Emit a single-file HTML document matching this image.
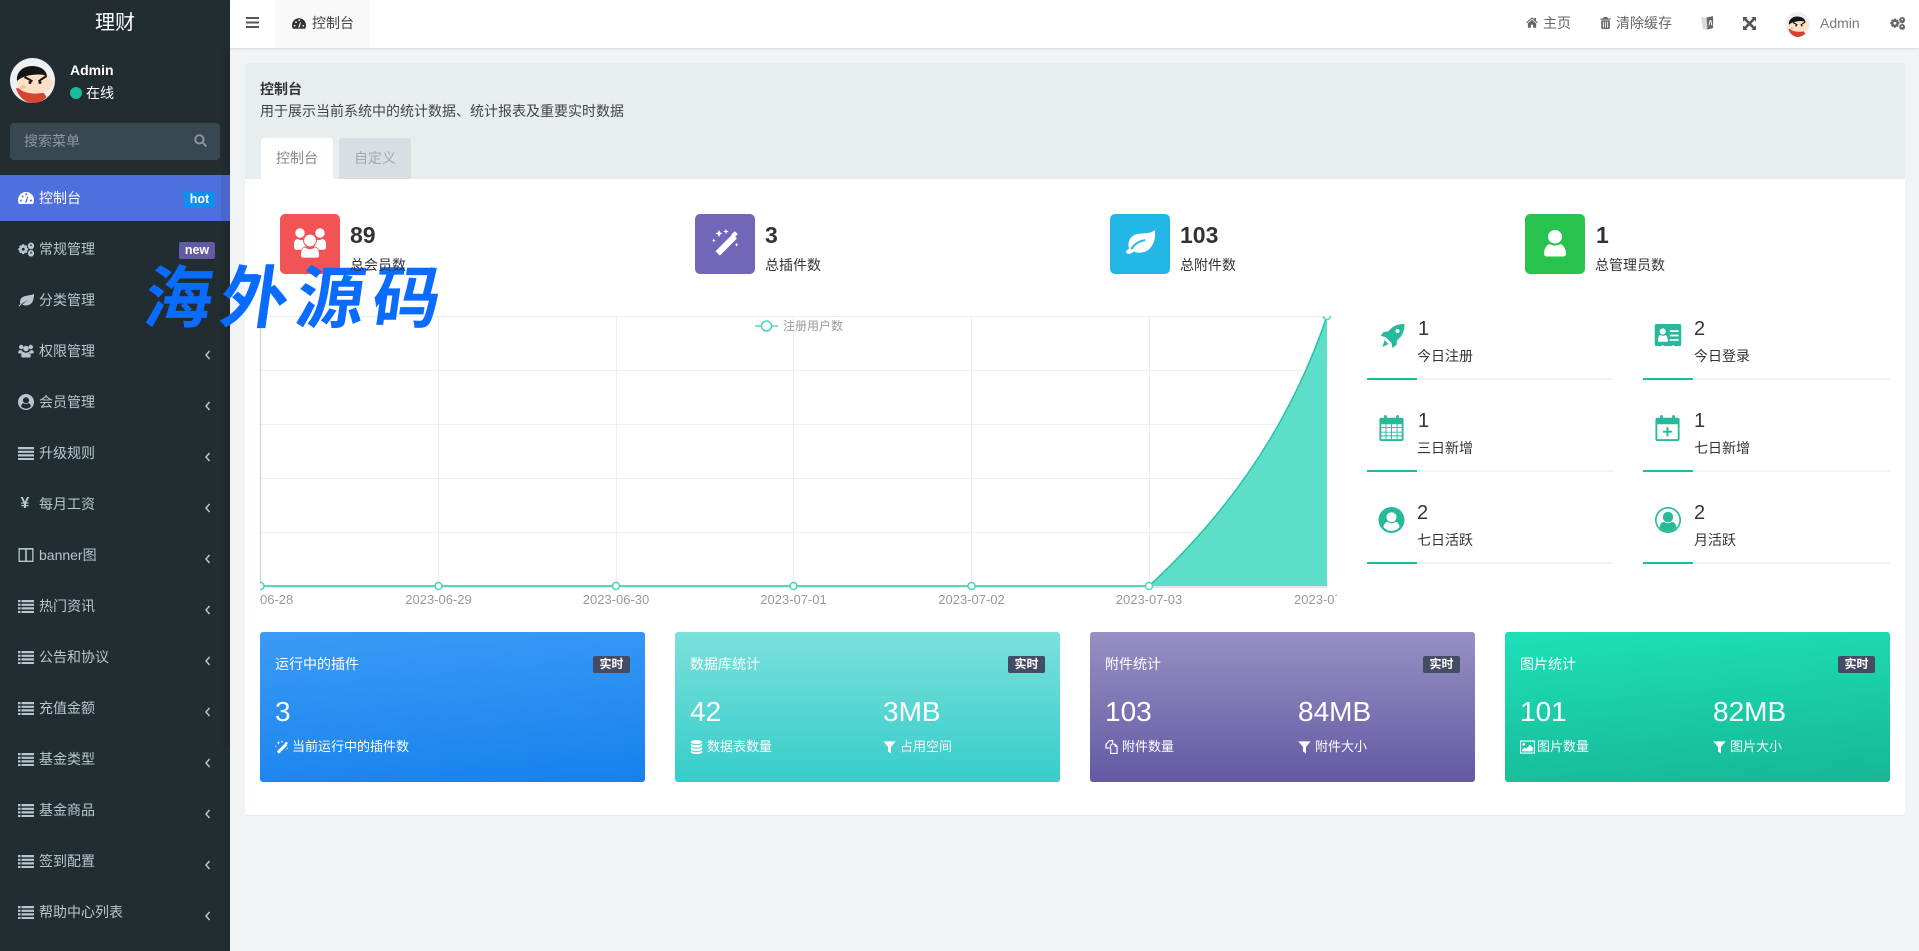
<!DOCTYPE html>
<html lang="zh"><head><meta charset="utf-8"><title>控制台</title>
<style>
*{box-sizing:border-box}
html,body{margin:0;padding:0;width:1919px;height:951px;overflow:hidden;background:#f1f4f6;font:14px/20px "Liberation Sans","Noto Sans CJK SC",sans-serif;color:#333}
.a{position:absolute;white-space:nowrap}
svg{display:block;fill:currentColor}
#side{position:absolute;left:0;top:0;width:230px;height:951px;background:#222d32;color:#b8c7ce}
.m{position:absolute;left:39px;white-space:nowrap}
.ic{position:absolute;left:18px;width:16px;height:16px}
.ch{position:absolute;left:204px;width:8px;height:12px;fill:none;stroke:#b8c7ce;stroke-width:1.5}
.wh{color:#fff}
.sq{position:absolute;top:214px;width:60px;height:60px;border-radius:5px;color:#fff}
.sq svg{position:absolute}
.sn{position:absolute;top:223px;font-size:23px;line-height:24px;font-weight:bold;color:#333}
.sl{position:absolute;top:255px;z-index:5}
.bar{position:absolute;height:2px;width:246px;background:#f3f3f3}
.bar i{display:block;height:2px;width:50px;background:#1abc9c}
.rn{position:absolute;font-size:20px;line-height:24px;color:#333}
.rl{position:absolute}
.ri{position:absolute;width:30px;height:28px;color:#26b99a}
.card{position:absolute;top:632px;width:385px;height:150px;border-radius:3px;color:#fff}
.card .t{position:absolute;left:15px;top:22px}
.card .b{position:absolute;right:15px;top:24px;width:37px;height:17px;line-height:17px;background:#444c65;border-radius:2px;font-size:12px;font-weight:bold;text-align:center}
.card .n{position:absolute;top:64px;font-size:28px;line-height:32px}
.card .s{position:absolute;top:105px;white-space:nowrap;font-size:13px}
.card .s svg{position:absolute;left:0;top:3px;width:13px;height:14px}
.card .s span{margin-left:17px}
.bdg{position:absolute;left:184px;height:17px;line-height:17px;border-radius:2px;color:#fff;font-weight:bold;font-size:12.5px;text-align:center}
</style></head><body>
<svg width="0" height="0" style="position:absolute">
<symbol id="dash" viewBox="0 0 16 14"><path fill-rule="evenodd" d="M8 1a8 8 0 0 0-8 8c0 1.800.4 3 1 4h14c.6-1 1-2.200 1-4a8 8 0 0 0-8-8zM3 8.500a1 1 0 1 1 0 2 1 1 0 0 1 0-2zM4.600 4.500a1 1 0 1 1 0 2 1 1 0 0 1 0-2zM7.200 3a1 1 0 1 1 1.600 1 1 1 0 0 1-1.600-1zM13 8.500a1 1 0 1 1 0 2 1 1 0 0 1 0-2zM7 11.500l2.300-6 1 .4-1.700 5.600z"/></symbol>
<symbol id="cogs" viewBox="0 0 16 14"><path fill-rule="evenodd" d="M4.200 2.300h2l.4 1.500 1.300-.7 1.400 1.400-.7 1.300 1.500.4v2l-1.500.4.7 1.300-1.400 1.400-1.300-.7-.4 1.500h-2l-.4-1.500-1.300.7-1.400-1.400.7-1.300L.3 8.200v-2l1.500-.4-.7-1.300 1.400-1.400 1.300.7zM5.200 5.700a1.500 1.500 0 1 0 0 3 1.500 1.500 0 0 0 0-3zM13 .3l.9.7 1-.1.500 1.200.9.700-.5 1.100.5 1.100-.9.700-.5 1.200-1-.1-.9.700-.9-.7-1 .1-.5-1.200-.9-.7.500-1.100-.5-1.100.9-.7.500-1.200 1 .1zM13 2.400a.9.9 0 1 0 0 1.800.9.9 0 0 0 0-1.800zM13 7.700l.9.7 1-.1.500 1.200.9.700-.5 1.100.5 1.100-.9.700-.5 1.200-1-.1-.9.700-.9-.7-1 .1-.5-1.200-.9-.7.500-1.100-.5-1.100.9-.7.500-1.200 1 .1zM13 9.800a.9.9 0 1 0 0 1.800.9.9 0 0 0 0-1.800z"/></symbol>
<symbol id="leaf" viewBox="0 0 16 14"><path d="M15.500 1C13 3 5 1.500 2.500 6.500c-.8 1.600-.6 3.400-.1 4.300C1.700 11.500 1 12.200.500 13l1 .5c.6-1 1.400-1.900 2.200-2.500 2-1.900 4-3 6.800-3.900-2.700 1.300-4.800 2.900-6.200 4.700 3.400 1.400 8 .6 10-2.700 1.300-2.200 1.700-5.700 1.700-8.100z"/></symbol>
<symbol id="leafb" viewBox="0 0 32 25"><path d="M31 0c1 8-1 15-6 20-5 4-11 4.500-16 2.500-1 .8-3 2.200-5 2.500-1.500.2-3-1-3-2.200 0-1.500 1.500-2 3-3.300C2.500 14 4 8 10 5 15 2.500 26 5 31 0z"/><path d="M6.500 20c3-5.500 8-8.500 14.500-9.500" fill="none" stroke="#22b7e5" stroke-width="2"/></symbol>
<symbol id="users" viewBox="0 0 16 14"><circle cx="3.200" cy="3" r="2.200"/><circle cx="12.800" cy="3" r="2.200"/><circle cx="8" cy="4.500" r="2.800"/><path d="M.2 9.300C.2 7 1.300 6 2.500 6c.7.600 1.300.8 2.200.7-.3 1-.3 2 0 3zM15.800 9.300c0-2.300-1.100-3.300-2.300-3.300-.7.600-1.300.8-2.200.7.300 1 .3 2 0 3zM4 13.500c-.6-.3-.7-1-.7-1.600 0-2 1-3.800 2.300-4 .6.500 1.500.9 2.400.9s1.800-.4 2.400-.9c1.300.2 2.300 2 2.300 4 0 .7-.1 1.300-.7 1.600z"/></symbol>
<symbol id="usersb" viewBox="0 0 32 30"><circle cx="6" cy="5" r="4.700"/><circle cx="26" cy="5" r="4.700"/><path d="M0 19v-3c0-3 1.500-5 4-5 1 1 3 1.500 5 .7 0 2.500 1 5 3 7-2 .6-3 1.500-4 3H2c-1 0-2-1-2-2.700zM32 19v-3c0-3-1.500-5-4-5-1 1-3 1.500-5 .7 0 2.500-1 5-3 7 2 .6 3 1.500 4 3h6c1 0 2-1 2-2.700z"/><g stroke="#f25355" stroke-width=".8"><circle cx="16" cy="12.500" r="6.300"/><path d="M9 30c-1.500 0-2.500-1-2.500-3 0-3 1-7 4.500-8 1.500 1.300 3 1.800 5 1.800s3.500-.5 5-1.800c3.500 1 4.500 5 4.500 8 0 2-1 3-2.500 3z"/></g></symbol>
<symbol id="uc" viewBox="0 0 16 16"><path fill-rule="evenodd" d="M8 0a8 8 0 1 0 0 16A8 8 0 0 0 8 0zM8 3.200a3 3 0 1 1 0 6.200 3 3 0 0 1 0-6.200zM3 12.300c.3-1.800 1.300-3 2.500-3.200.7.600 1.500 1 2.500 1s1.800-.4 2.500-1c1.200.2 2.200 1.400 2.500 3.200A6.500 6.500 0 0 1 8 14.700a6.500 6.500 0 0 1-5-2.400z"/></symbol>
<symbol id="uco" viewBox="0 0 16 16"><path fill-rule="evenodd" d="M8 0a8 8 0 1 0 0 16A8 8 0 0 0 8 0zM8 1a7 7 0 1 1 0 14A7 7 0 0 1 8 1z"/><circle cx="8" cy="6.200" r="3.200"/><path d="M2.800 12.500c.3-2 1.500-3.200 2.700-3.400.7.600 1.500.9 2.500.9s1.800-.3 2.500-.9c1.200.2 2.400 1.400 2.700 3.400A7 7 0 0 1 8 15a7 7 0 0 1-5.200-2.500z"/></symbol>
<symbol id="just" viewBox="0 0 16 14"><path d="M0 1h16v2.200H0zM0 4.700h16v2.200H0zM0 8.300h16v2.200H0zM0 12h16v2H0z"/></symbol>
<symbol id="list" viewBox="0 0 16 14"><path d="M0 1h2.500v2.200H0zM3.500 1H16v2.200H3.500zM0 4.700h2.500v2.200H0zM3.500 4.700H16v2.200H3.500zM0 8.300h2.500v2.200H0zM3.500 8.300H16v2.200H3.500zM0 12h2.500v2H0zM3.500 12H16v2H3.500z"/></symbol>
<symbol id="cols" viewBox="0 0 16 14"><path fill-rule="evenodd" d="M.5 0h15v14H.5zM1.800 1.600v11h5.400v-11zM8.800 1.600v11h5.400v-11z"/></symbol>
<symbol id="wand" viewBox="0 0 32 32"><path d="M23.500 7l5 5L9 31.500l-5-5zM26 3.500l3.500 3.500-4 4-3.500-3.500zM8 2l1.200 3L12 6.200 9.200 7.500 8 10.500 6.800 7.500 4 6.200 6.800 5zM16 1l.9 2.100L19 4l-2.100.9L16 7l-.9-2.100L13 4l2.100-.9zM2 12l.7 1.500 1.500.7-1.500.7L2 16.500l-.7-1.600-1.300-.7 1.300-.7zM28 17l.7 1.500 1.500.7-1.500.7-.7 1.600-.7-1.600-1.300-.7 1.300-.7z"/></symbol>
<symbol id="usr" viewBox="0 0 22 27"><ellipse cx="11" cy="6.700" rx="7" ry="6.700"/><path d="M3 26.500c-2 0-3-1-3-3 0-4 2-8 5.500-9.500 1.500 1 3.500 1.500 5.500 1.500s4-.5 5.500-1.500c3.500 1.500 5.500 5.500 5.500 9.500 0 2-1 3-3 3z"/></symbol>
<symbol id="db" viewBox="0 0 14 16"><path d="M7 0c3.600 0 6.500 1 6.500 2.300S10.600 4.700 7 4.700.5 3.600.5 2.300 3.400 0 7 0zM.5 4.100C2 5.200 4.500 5.800 7 5.800s5-.6 6.500-1.700v2.200C13.500 7.600 10.600 8.700 7 8.700S.5 7.600.5 6.300zM.5 8.100C2 9.200 4.500 9.800 7 9.800s5-.6 6.500-1.700v2.200c0 1.300-2.900 2.400-6.500 2.400S.5 11.600.5 10.300zM.5 12.100C2 13.200 4.500 13.800 7 13.800s5-.6 6.500-1.700v1.600C13.500 15 10.600 16 7 16S.5 15 .5 13.700z"/></symbol>
<symbol id="fil" viewBox="0 0 14 16"><path d="M0 1.500h14L8.700 8v7.500l-3.400-2.500V8z"/></symbol>
<symbol id="files" viewBox="0 0 14 16"><path fill-rule="evenodd" d="M4.500 0H9l-.1 4.500-2.500 2v3.300H0V4.500zM4.500 1.500L1.500 5.200v3.300h3.900V5.700l2.300-1.800V1.500zM9 4.200h2.500L14 7v9H5.500V9.800h1.200v4.900h6V7.800H10.500V5.500H9z"/></symbol>
<symbol id="pic" viewBox="0 0 16 14"><path fill-rule="evenodd" d="M0 0h16v14H0zM1.200 1.200v11.600h13.600V1.200zM4 2.500a1.500 1.500 0 1 1 0 3 1.500 1.500 0 0 1 0-3zM2.400 11.600V9.800L5 7.300l1.600 1.500 4-4.400 3 3.300v3.900z"/></symbol>
<symbol id="face" viewBox="0 0 45 45"><circle cx="22.500" cy="22.500" r="22.500" fill="#eef0f1"/><path d="M6 30c2 8 9 15 16.500 15 6 0 11-2.500 14-6l-4-6-20-2z" fill="#d6432e"/><path d="M7 22c-1 6 2 10 8 12 8 2.500 17 2 23-1 4-2 6-7 4-10-1-3-3-6-5-7H12c-2 1-4 3-5 6z" fill="#fde0c5"/><path d="M7 23C6 15 12 8 22 8c7 0 14 3 15 10-3-1-5-1.500-8-1.500-5 0-9 .5-14 2-3 1-5 2-8 4.500z" fill="#151515"/><path d="M15 18l8 4.500-1 1.500-8-4zM36 17l-8 5.500 1 1.500 8-5z" fill="#151515"/><circle cx="20" cy="24.500" r="1.500" fill="#151515"/><circle cx="30" cy="24.500" r="1.500" fill="#151515"/><ellipse cx="13" cy="29" rx="2.800" ry="1.800" fill="#f6b8a8"/></symbol>
</svg>

<div id="side">
<div class="a" style="left:0;width:230px;top:11px;line-height:24px;text-align:center;font-size:20px;color:#fff">理财</div>
<div class="a" style="left:221px;top:48px;width:9px;height:698px;background:rgba(0,0,0,.05)"></div>
<svg class="a" style="left:10px;top:58px;width:45px;height:45px"><use href="#face"/></svg>
<div class="a" style="left:70px;top:60px;font-weight:bold;color:#fff">Admin</div>
<div class="a" style="left:70px;top:87px;width:12px;height:12px;border-radius:50%;background:#18bc9c"></div>
<div class="a" style="left:86px;top:83px;color:#fff">在线</div>
<div class="a" style="left:10px;top:123px;width:210px;height:37px;background:#374850;border-radius:4px"></div>
<div class="a" style="left:24px;top:131px;color:#8b989e">搜索菜单</div>
<svg class="a" viewBox="0 0 14 14" style="left:194px;top:134px;width:13px;height:13px;fill:none;stroke:#8b989e;stroke-width:2"><circle cx="5.800" cy="5.800" r="4.500"/><path d="M9 9l4.300 4.300"/></svg>

<div class="a" style="left:0;top:175px;width:230px;height:46px;background:#4e70dc"></div>
<div class="a" style="left:221px;top:175px;width:9px;height:46px;background:#4a68cc"></div>
<svg class="ic wh" style="top:190px"><use href="#dash"/></svg><div class="m wh" style="top:188px">控制台</div>
<div class="bdg" style="top:191px;width:31px;background:#0f8fef">hot</div>

<svg class="ic" style="top:241px"><use href="#cogs"/></svg><div class="m" style="top:239px">常规管理</div>
<div class="bdg" style="left:179px;top:242px;width:36px;background:#625aa3">new</div>
<svg class="ic" style="top:292px"><use href="#leaf"/></svg><div class="m" style="top:290px">分类管理</div>
<svg class="ic" style="top:343px"><use href="#users"/></svg><div class="m" style="top:341px">权限管理</div>
<svg class="ch" viewBox="0 0 8 12" style="top:349px"><path d="M5.500 2L2 6l3.500 4"/></svg>
<svg class="ic" style="top:394px"><use href="#uc"/></svg><div class="m" style="top:392px">会员管理</div>
<svg class="ch" viewBox="0 0 8 12" style="top:400px"><path d="M5.500 2L2 6l3.500 4"/></svg>
<svg class="ic" style="top:445px"><use href="#just"/></svg><div class="m" style="top:443px">升级规则</div>
<svg class="ch" viewBox="0 0 8 12" style="top:451px"><path d="M5.500 2L2 6l3.500 4"/></svg>
<div class="a" style="left:19px;top:494px;width:12px;text-align:center;font-weight:bold;font-size:16px">¥</div><div class="m" style="top:494px">每月工资</div>
<svg class="ch" viewBox="0 0 8 12" style="top:502px"><path d="M5.500 2L2 6l3.500 4"/></svg>
<svg class="ic" style="top:547px"><use href="#cols"/></svg><div class="m" style="top:545px">banner图</div>
<svg class="ch" viewBox="0 0 8 12" style="top:553px"><path d="M5.500 2L2 6l3.500 4"/></svg>
<svg class="ic" style="top:598px"><use href="#list"/></svg><div class="m" style="top:596px">热门资讯</div>
<svg class="ch" viewBox="0 0 8 12" style="top:604px"><path d="M5.500 2L2 6l3.500 4"/></svg>
<svg class="ic" style="top:649px"><use href="#list"/></svg><div class="m" style="top:647px">公告和协议</div>
<svg class="ch" viewBox="0 0 8 12" style="top:655px"><path d="M5.500 2L2 6l3.500 4"/></svg>
<svg class="ic" style="top:700px"><use href="#list"/></svg><div class="m" style="top:698px">充值金额</div>
<svg class="ch" viewBox="0 0 8 12" style="top:706px"><path d="M5.500 2L2 6l3.500 4"/></svg>
<svg class="ic" style="top:751px"><use href="#list"/></svg><div class="m" style="top:749px">基金类型</div>
<svg class="ch" viewBox="0 0 8 12" style="top:757px"><path d="M5.500 2L2 6l3.500 4"/></svg>
<svg class="ic" style="top:802px"><use href="#list"/></svg><div class="m" style="top:800px">基金商品</div>
<svg class="ch" viewBox="0 0 8 12" style="top:808px"><path d="M5.500 2L2 6l3.500 4"/></svg>
<svg class="ic" style="top:853px"><use href="#list"/></svg><div class="m" style="top:851px">签到配置</div>
<svg class="ch" viewBox="0 0 8 12" style="top:859px"><path d="M5.500 2L2 6l3.500 4"/></svg>
<svg class="ic" style="top:904px"><use href="#list"/></svg><div class="m" style="top:902px">帮助中心列表</div>
<svg class="ch" viewBox="0 0 8 12" style="top:910px"><path d="M5.500 2L2 6l3.500 4"/></svg>
</div>

<!-- header -->
<div class="a" style="left:230px;top:0;width:1689px;height:48px;background:#fff;box-shadow:0 1px 2px rgba(0,0,0,.12)"></div>
<svg class="a" viewBox="0 0 13 11" style="left:246px;top:17px;width:13px;height:11px;color:#555"><path d="M0 0h13v2H0zM0 4.500h13v2H0zM0 9h13v2H0z"/></svg>
<div class="a" style="left:275px;top:0;width:95px;height:48px;background:#f9f9f9"></div>
<svg class="a" viewBox="0 0 16 14" style="left:292px;top:17px;width:14px;height:13px;color:#333"><use href="#dash"/></svg>
<div class="a" style="left:312px;top:13px;color:#444">控制台</div>
<svg class="a" viewBox="0 0 16 14" style="left:1526px;top:17px;width:12px;height:11px;color:#666"><path d="M8 0l3 2.700V1h2.300v3.700L16 7l-1 1-7-6-7 6-1-1zM8 3.300l5.500 4.800V14H9.500v-4h-3v4h-4V8.100z"/></svg>
<div class="a" style="left:1543px;top:13px;color:#666">主页</div>
<svg class="a" viewBox="0 0 12 14" style="left:1600px;top:17px;width:11px;height:12px;color:#666"><path fill-rule="evenodd" d="M4 0h4l1 1.800h3v1.400H0V1.800h3zM1 4h10v9a1 1 0 0 1-1 1H2a1 1 0 0 1-1-1zM3 5.500v7h1v-7zM5.500 5.500v7h1v-7zM8 5.500v7h1v-7z"/></svg>
<div class="a" style="left:1616px;top:13px;color:#666">清除缓存</div>
<svg class="a" viewBox="0 0 14 16" style="left:1701px;top:16px;width:13px;height:15px"><path d="M0 1l7 1 1 13-6-1z" fill="#d8dadb"/><path d="M6 1.500l7-1.500v13l-6 1.500z" fill="#666"/><path d="M8.700 10l1-5h1l1 5" fill="none" stroke="#fff"/></svg>
<svg class="a" viewBox="0 0 14 14" style="left:1743px;top:17px;width:13px;height:13px;color:#555"><path d="M0 0h5L3.500 1.500 7 5 10.500 1.500 9 0h5v5l-1.500-1.500L9 7l3.500 3.500L14 9v5H9l1.500-1.500L7 9l-3.500 3.500L5 14H0V9l1.500 1.500L5 7 1.500 3.500 0 5z"/></svg>
<svg class="a" style="left:1785px;top:12px;width:25px;height:25px"><use href="#face"/></svg>
<div class="a" style="left:1820px;top:13px;color:#777">Admin</div>
<svg class="a" viewBox="0 0 16 14" style="left:1890px;top:16px;width:15px;height:14px;color:#666"><use href="#cogs"/></svg>

<!-- panel -->
<div class="a" style="left:245px;top:63px;width:1660px;height:752px;background:#fff;border-radius:3px;box-shadow:0 1px 1px rgba(0,0,0,.06)"></div>
<div class="a" style="left:245px;top:63px;width:1660px;height:116px;background:#e8edf0;border-radius:3px 3px 0 0"></div>
<div class="a" style="left:260px;top:79px;font-weight:bold">控制台</div>
<div class="a" style="left:260px;top:101px;color:#444">用于展示当前系统中的统计数据、统计报表及重要实时数据</div>
<div class="a" style="left:261px;top:138px;width:72px;height:41px;line-height:41px;background:#fff;border-radius:3px 3px 0 0;text-align:center;color:#888">控制台</div>
<div class="a" style="left:339px;top:138px;width:72px;height:41px;line-height:41px;background:#d7dee4;border-radius:3px 3px 0 0;text-align:center;color:#a5a9ac">自定义</div>

<div class="sq" style="left:280px;background:#f25355"><svg style="left:14px;top:14px;width:32px;height:30px"><use href="#usersb"/></svg></div>
<div class="sn" style="left:350px">89</div><div class="sl" style="left:350px">总会员数</div>
<div class="sq" style="left:695px;background:#7266b8"><svg style="left:17px;top:14px;width:28px;height:28px"><use href="#wand"/></svg></div>
<div class="sn" style="left:765px">3</div><div class="sl" style="left:765px">总插件数</div>
<div class="sq" style="left:1110px;background:#22b7e5"><svg style="left:15px;top:16px;width:31px;height:24px"><use href="#leafb"/></svg></div>
<div class="sn" style="left:1180px">103</div><div class="sl" style="left:1180px">总附件数</div>
<div class="sq" style="left:1525px;background:#28c34e"><svg style="left:19px;top:16px;width:22px;height:27px"><use href="#usr"/></svg></div>
<div class="sn" style="left:1596px">1</div><div class="sl" style="left:1595px">总管理员数</div>

<!-- chart -->
<svg class="a" width="1077" height="300" viewBox="260 310 1077 300" style="left:260px;top:310px;font:13px 'Liberation Sans','Noto Sans CJK SC',sans-serif">
<defs><clipPath id="cp"><rect x="260" y="316" width="1077" height="290"/></clipPath></defs>
<g stroke="#eee" stroke-width="1" fill="none">
<path d="M260 316.500H1327M260 370.500H1327M260 424.500H1327M260 478.500H1327M260 532.500H1327"/>
<path d="M438.500 316V586M616.500 316V586M793.500 316V586M971.500 316V586M1149.500 316V586M1327 316V586"/>
</g>
<path d="M260.500 316V587M260 587H1327" stroke="#ccc" stroke-width="1" fill="none"/>
<path d="M1149 586C1215 525 1285 440 1327 316V586Z" fill="#5ddec8"/>
<path d="M1149 586C1215 525 1285 440 1327 316" fill="none" stroke="#22c3a6" stroke-width="1.500"/>
<path d="M260 586H1149" stroke="#5ad3bc" stroke-width="2"/>
<g fill="#fff" stroke="#3fd9c0" stroke-width="1.500" clip-path="url(#cp)">
<circle cx="260.500" cy="586" r="3.500"/><circle cx="438.500" cy="586" r="3.500"/><circle cx="616" cy="586" r="3.500"/><circle cx="793.500" cy="586" r="3.500"/><circle cx="971.500" cy="586" r="3.500"/><circle cx="1149" cy="586" r="3.500"/><circle cx="1327" cy="316" r="3.500"/>
</g>
<path d="M755 326H778" stroke="#5ad3bc" stroke-width="1.500"/>
<circle cx="766.500" cy="326" r="5" fill="#fff" stroke="#3fd9c0" stroke-width="1.500"/>
<text x="783" y="330" fill="#999" style="font-size:12px">注册用户数</text>
<g fill="#999">
<text x="260" y="604">06-28</text>
<text x="438.500" y="604" text-anchor="middle">2023-06-29</text>
<text x="616" y="604" text-anchor="middle">2023-06-30</text>
<text x="793.500" y="604" text-anchor="middle">2023-07-01</text>
<text x="971.500" y="604" text-anchor="middle">2023-07-02</text>
<text x="1149" y="604" text-anchor="middle">2023-07-03</text>
<text x="1294" y="604">2023-07-04</text>
</g>
</svg>

<!-- watermark -->
<div class="a" style="left:139px;top:257px;z-index:3;font:bold 68px/84px 'Liberation Sans','Noto Sans CJK SC',sans-serif;letter-spacing:8px;color:#0a6cff;transform:skewX(-8deg);transform-origin:left bottom">海外源码</div>

<!-- right stats -->
<svg class="ri" viewBox="0 0 24 24" style="left:1380px;top:324px;width:25px;height:24px"><path fill-rule="evenodd" d="M24 0C24 5 23 10 19 14L16.500 16.500 16 21 12 24 11 19 5 13 0 12 3 8 7.500 7.500 10 5C14 1 19 0 24 0zM17 5a2 2 0 1 0 0 4 2 2 0 0 0 0-4zM4 16l4 4-6 3z"/></svg>
<div class="rn" style="left:1418px;top:317px">1</div><div class="rl" style="left:1417px;top:346px">今日注册</div>
<div class="bar" style="left:1367px;top:378px"><i></i></div>
<svg class="ri" viewBox="0 0 30 26" style="left:1653px;top:324px;height:23px"><path fill-rule="evenodd" d="M2 0h26a2 2 0 0 1 2 2v21a2 2 0 0 1-2 2h-6v-1h-2v1H10v-1H8v1H2a2 2 0 0 1-2-2V2a2 2 0 0 1 2-2zM9 5a3.500 3.500 0 1 0 0 7 3.500 3.500 0 0 0 0-7zM4 20h11c0-4-1.500-7-3-7.500-1.800 1.200-4 1.200-6 0C4.500 13 3.500 16 4 20zM17 7v2h10V7zM17 12v2h10v-2zM17 17v2h10v-2z"/></svg>
<div class="rn" style="left:1694px;top:317px">2</div><div class="rl" style="left:1694px;top:346px">今日登录</div>
<div class="bar" style="left:1643px;top:378px;width:247px"><i></i></div>

<svg class="ri" viewBox="0 0 26 28" style="left:1379px;top:415px;width:25px;height:26px"><path fill-rule="evenodd" d="M2 3h3V1.500a1.500 1.500 0 0 1 3 0V3h10V1.500a1.500 1.500 0 0 1 3 0V3h3a2 2 0 0 1 2 2v21a2 2 0 0 1-2 2H2a2 2 0 0 1-2-2V5a2 2 0 0 1 2-2zM2 10v3h4.500v-3zM7.500 10v3h5v-3zM13.500 10v3h5v-3zM19.500 10v3H24v-3zM2 14v4h4.500v-4zM7.500 14v4h5v-4zM13.500 14v4h5v-4zM19.500 14v4H24v-4zM2 19v3h4.500v-3zM7.500 19v3h5v-3zM13.500 19v3h5v-3zM19.500 19v3H24v-3zM2 23v3h4.500v-3zM7.500 23v3h5v-3zM13.500 23v3h5v-3zM19.500 23v3H24v-3z"/></svg>
<div class="rn" style="left:1418px;top:409px">1</div><div class="rl" style="left:1417px;top:438px">三日新增</div>
<div class="bar" style="left:1367px;top:470px"><i></i></div>
<svg class="ri" viewBox="0 0 26 28" style="left:1655px;top:415px;width:25px;height:26px"><path fill-rule="evenodd" d="M2 3h3V1.500a1.500 1.500 0 0 1 3 0V3h10V1.500a1.500 1.500 0 0 1 3 0V3h3a2 2 0 0 1 2 2v21a2 2 0 0 1-2 2H2a2 2 0 0 1-2-2V5a2 2 0 0 1 2-2zM2 10v16h22V10zM12 13h2v4h4v2h-4v4h-2v-4H8v-2h4z"/></svg>
<div class="rn" style="left:1694px;top:409px">1</div><div class="rl" style="left:1694px;top:438px">七日新增</div>
<div class="bar" style="left:1643px;top:470px;width:247px"><i></i></div>

<svg class="ri" viewBox="0 0 16 16" style="left:1378px;top:507px;width:27px;height:26px"><use href="#uc"/></svg>
<div class="rn" style="left:1417px;top:501px">2</div><div class="rl" style="left:1417px;top:530px">七日活跃</div>
<div class="bar" style="left:1367px;top:562px"><i></i></div>
<svg class="ri" viewBox="0 0 16 16" style="left:1655px;top:507px;width:26px;height:26px"><use href="#uco"/></svg>
<div class="rn" style="left:1694px;top:501px">2</div><div class="rl" style="left:1694px;top:530px">月活跃</div>
<div class="bar" style="left:1643px;top:562px;width:247px"><i></i></div>

<!-- cards -->
<div class="card" style="left:260px;background:linear-gradient(175deg,#3b9bf5,#1681ee)">
<div class="t">运行中的插件</div><div class="b">实时</div>
<div class="n" style="left:15px">3</div>
<div class="s" style="left:15px"><svg style="width:14px"><use href="#wand"/></svg><span>当前运行中的插件数</span></div>
</div>
<div class="card" style="left:675px;background:linear-gradient(180deg,#7be0dc,#36cdc9)">
<div class="t">数据库统计</div><div class="b">实时</div>
<div class="n" style="left:15px">42</div><div class="n" style="left:208px">3MB</div>
<div class="s" style="left:15px"><svg><use href="#db"/></svg><span>数据表数量</span></div>
<div class="s" style="left:208px"><svg><use href="#fil"/></svg><span>占用空间</span></div>
</div>
<div class="card" style="left:1090px;background:linear-gradient(180deg,#9691c3,#625aa3)">
<div class="t">附件统计</div><div class="b">实时</div>
<div class="n" style="left:15px">103</div><div class="n" style="left:208px">84MB</div>
<div class="s" style="left:15px"><svg><use href="#files"/></svg><span>附件数量</span></div>
<div class="s" style="left:208px"><svg><use href="#fil"/></svg><span>附件大小</span></div>
</div>
<div class="card" style="left:1505px;background:linear-gradient(175deg,#1ee0b8,#16b795)">
<div class="t">图片统计</div><div class="b">实时</div>
<div class="n" style="left:15px">101</div><div class="n" style="left:208px">82MB</div>
<div class="s" style="left:15px"><svg style="width:15px"><use href="#pic"/></svg><span>图片数量</span></div>
<div class="s" style="left:208px"><svg><use href="#fil"/></svg><span>图片大小</span></div>
</div>
</body></html>
